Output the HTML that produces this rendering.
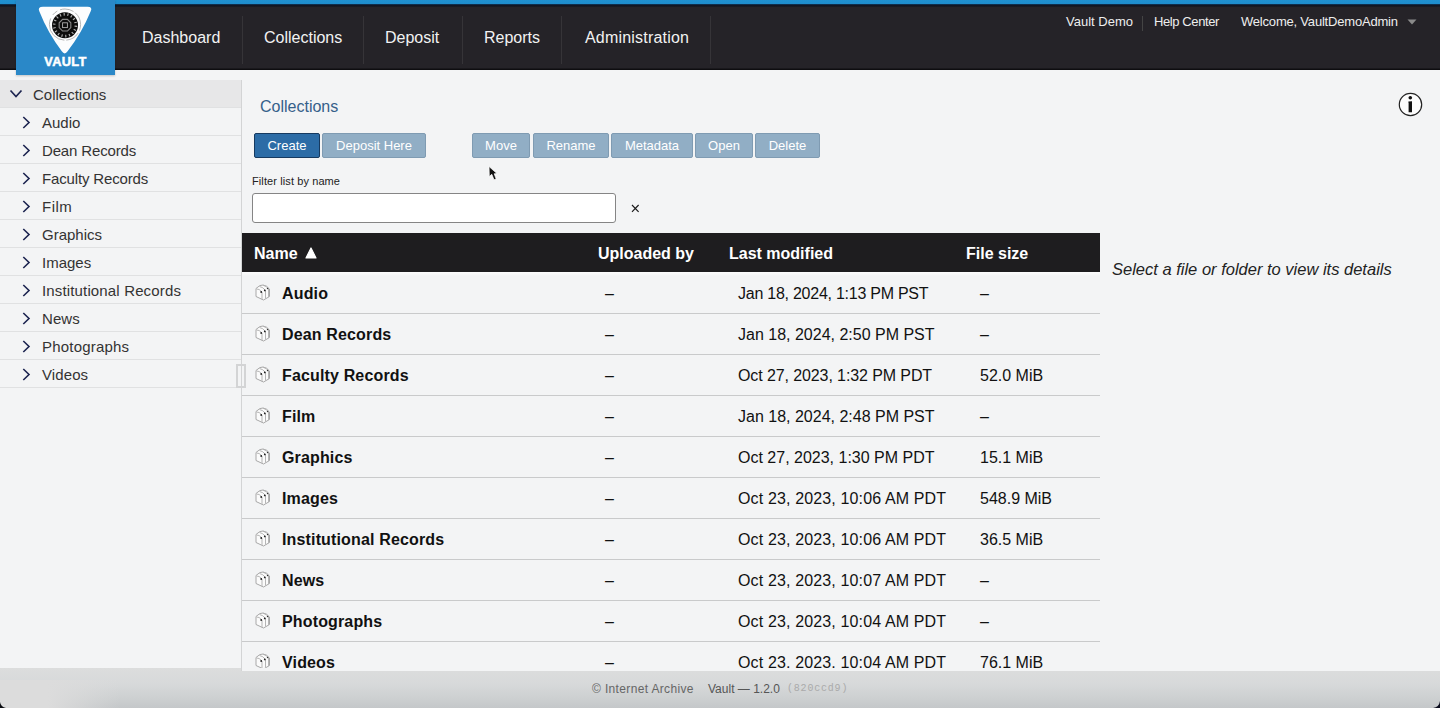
<!DOCTYPE html>
<html><head><meta charset="utf-8"><style>
*{box-sizing:border-box;margin:0;padding:0}
html,body{width:1440px;height:708px;overflow:hidden;background:#f3f4f5;font-family:"Liberation Sans",sans-serif;color:#222}
.abs{position:absolute;white-space:nowrap}
#topstrip{position:absolute;left:0;top:0;width:1440px;height:5px;background:linear-gradient(#2090d0 0,#1e8dcd 4px,#0d1a30 4.6px,#0d1a30 5px)}
#header{position:absolute;left:0;top:5px;width:1440px;height:65px;background:linear-gradient(#0f1626 0,#121620 1.2px,#252328 2.2px,#252328 63px,#0e0d10 64px)}
#logo{position:absolute;left:16px;top:0;width:99px;height:75px;background:#2a88c8;box-shadow:0 1px 2px rgba(0,0,0,.2)}
.nav{position:absolute;top:6px;height:64px;line-height:64px;color:#f2f2f2;font-size:16px;white-space:nowrap}
.sep{position:absolute;top:16px;width:1px;height:48px;background:#363438}
.rnav{position:absolute;top:14px;font-size:13px;color:#eee;white-space:nowrap}
#sidebar{position:absolute;left:0;top:80px;width:242px;height:591px;border-right:1px solid #d3d4d5;background:#f3f4f5}
.srow{position:absolute;left:0;width:241px;height:28px;border-bottom:1px solid #e0e1e2;font-size:15px;color:#333;line-height:28px}
.chev{position:absolute}
.btn{position:absolute;top:133px;height:25px;color:#fff;font-size:13px;line-height:24px;text-align:center;border-radius:2px;white-space:nowrap}
.b1{background:#2c6ca6;border:1px solid #163a60}
.b2{background:#91aec5;border:1px solid #7f9bb2}
#thead{position:absolute;left:242px;top:233px;width:858px;height:39px;background:#1e1d1f;color:#fff;font-weight:bold;font-size:16px}
.th{position:absolute;top:1px;line-height:39px;white-space:nowrap}
.row{position:absolute;left:242px;width:858px;height:42px;border-bottom:1px solid #c9cacb}
.cell{position:absolute;top:2px;line-height:40px;white-space:nowrap;font-size:16px;color:#111}
.nm{font-weight:bold;letter-spacing:0.15px}
</style></head><body>
<div id="topstrip"></div><div id="header"></div>
<div id="logo"><svg width="99" height="75" viewBox="0 0 99 75" style="position:absolute;left:0;top:0">
<path d="M27 6.8 L71.5 6.8 Q77 6.8 74.6 11.6 Q65.8 33 51.6 51.3 Q48.7 55.6 45.8 51.3 Q31.8 33 23.4 11.6 Q21.2 6.8 27 6.8 Z" fill="#fcfdfe"/>
<circle cx="49" cy="24.6" r="15.6" fill="none" stroke="#9a9a9a" stroke-width="0.7" stroke-dasharray="6 3 14 2 30 4"/>
<circle cx="49" cy="25.2" r="13" fill="#0d0d0d"/>
<path d="M58.55 26.16L61.14 26.42M57.65 29.37L59.99 30.50M55.70 32.07L57.52 33.94M52.95 33.95L54.01 36.32M49.71 34.77L49.91 37.37M46.40 34.44L45.69 36.94M43.39 32.99L41.88 35.10M41.07 30.61L38.92 32.07M39.70 27.57L37.18 28.21M39.45 24.24L36.86 23.98M40.35 21.03L38.01 19.90M42.30 18.33L40.48 16.46M45.05 16.45L43.99 14.08M48.29 15.63L48.09 13.03M51.60 15.96L52.31 13.46M54.61 17.41L56.12 15.30M56.93 19.79L59.08 18.33M58.30 22.83L60.82 22.19" stroke="#dcdcdc" stroke-width="1.1" opacity="0.8"/>
<circle cx="49" cy="25.2" r="9" fill="#0d0d0d"/>
<polygon points="54.82,27.61 51.41,31.02 46.59,31.02 43.18,27.61 43.18,22.79 46.59,19.38 51.41,19.38 54.82,22.79" fill="none" stroke="#8a8a8a" stroke-width="1.1"/>
<rect x="46.6" y="22.8" width="4.8" height="4.8" fill="none" stroke="#b0b0b0" stroke-width="0.9"/>
<text x="49.5" y="66" text-anchor="middle" font-family="Liberation Sans" font-weight="bold" font-size="12.8" fill="#fff" stroke="#fff" stroke-width="0.5" letter-spacing="0.3">VAULT</text>
</svg></div>
<div class="nav" style="left:142px;">Dashboard</div>
<div class="nav" style="left:264px;">Collections</div>
<div class="nav" style="left:385px;">Deposit</div>
<div class="nav" style="left:484px;">Reports</div>
<div class="nav" style="left:585px;letter-spacing:0.2px">Administration</div>
<div class="sep" style="left:242px"></div>
<div class="sep" style="left:363px"></div>
<div class="sep" style="left:462px"></div>
<div class="sep" style="left:561px"></div>
<div class="sep" style="left:710px"></div>
<div class="rnav" style="left:1066px">Vault Demo</div>
<div class="abs" style="left:1142px;top:16px;width:1px;height:15px;background:#444"></div>
<div class="rnav" style="left:1154px;letter-spacing:-0.4px">Help Center</div>
<div class="rnav" style="left:1241px;letter-spacing:-0.2px">Welcome, VaultDemoAdmin</div>
<svg class="abs" style="left:1407px;top:19px" width="10" height="6" viewBox="0 0 10 6"><path d="M0.5 0.5 L9.5 0.5 L5 5.5 Z" fill="#8a8a8a"/></svg>
<div id="sidebar"></div>
<div class="srow" style="top:80px;background:#e7e7e8"><svg class="chev" style="left:9px;top:9px" width="14" height="10" viewBox="0 0 14 10"><path d="M1.5 1.5 L7 7.5 L12.5 1.5" fill="none" stroke="#1c2450" stroke-width="1.7"/></svg><span style="position:absolute;left:33px;top:1px">Collections</span></div>
<div class="srow" style="top:108px"><svg class="chev" style="left:22px;top:8px" width="9" height="13" viewBox="0 0 9 13"><path d="M1.3 1 L7 6.5 L1.3 12" fill="none" stroke="#1c2450" stroke-width="1.6"/></svg><span style="position:absolute;left:42px;top:1px;letter-spacing:0px">Audio</span></div>
<div class="srow" style="top:136px"><svg class="chev" style="left:22px;top:8px" width="9" height="13" viewBox="0 0 9 13"><path d="M1.3 1 L7 6.5 L1.3 12" fill="none" stroke="#1c2450" stroke-width="1.6"/></svg><span style="position:absolute;left:42px;top:1px;letter-spacing:-0.15px">Dean Records</span></div>
<div class="srow" style="top:164px"><svg class="chev" style="left:22px;top:8px" width="9" height="13" viewBox="0 0 9 13"><path d="M1.3 1 L7 6.5 L1.3 12" fill="none" stroke="#1c2450" stroke-width="1.6"/></svg><span style="position:absolute;left:42px;top:1px;letter-spacing:-0.15px">Faculty Records</span></div>
<div class="srow" style="top:192px"><svg class="chev" style="left:22px;top:8px" width="9" height="13" viewBox="0 0 9 13"><path d="M1.3 1 L7 6.5 L1.3 12" fill="none" stroke="#1c2450" stroke-width="1.6"/></svg><span style="position:absolute;left:42px;top:1px;letter-spacing:0.5px">Film</span></div>
<div class="srow" style="top:220px"><svg class="chev" style="left:22px;top:8px" width="9" height="13" viewBox="0 0 9 13"><path d="M1.3 1 L7 6.5 L1.3 12" fill="none" stroke="#1c2450" stroke-width="1.6"/></svg><span style="position:absolute;left:42px;top:1px;letter-spacing:0px">Graphics</span></div>
<div class="srow" style="top:248px"><svg class="chev" style="left:22px;top:8px" width="9" height="13" viewBox="0 0 9 13"><path d="M1.3 1 L7 6.5 L1.3 12" fill="none" stroke="#1c2450" stroke-width="1.6"/></svg><span style="position:absolute;left:42px;top:1px;letter-spacing:0px">Images</span></div>
<div class="srow" style="top:276px"><svg class="chev" style="left:22px;top:8px" width="9" height="13" viewBox="0 0 9 13"><path d="M1.3 1 L7 6.5 L1.3 12" fill="none" stroke="#1c2450" stroke-width="1.6"/></svg><span style="position:absolute;left:42px;top:1px;letter-spacing:0.15px">Institutional Records</span></div>
<div class="srow" style="top:304px"><svg class="chev" style="left:22px;top:8px" width="9" height="13" viewBox="0 0 9 13"><path d="M1.3 1 L7 6.5 L1.3 12" fill="none" stroke="#1c2450" stroke-width="1.6"/></svg><span style="position:absolute;left:42px;top:1px;letter-spacing:0.1px">News</span></div>
<div class="srow" style="top:332px"><svg class="chev" style="left:22px;top:8px" width="9" height="13" viewBox="0 0 9 13"><path d="M1.3 1 L7 6.5 L1.3 12" fill="none" stroke="#1c2450" stroke-width="1.6"/></svg><span style="position:absolute;left:42px;top:1px;letter-spacing:0.2px">Photographs</span></div>
<div class="srow" style="top:360px"><svg class="chev" style="left:22px;top:8px" width="9" height="13" viewBox="0 0 9 13"><path d="M1.3 1 L7 6.5 L1.3 12" fill="none" stroke="#1c2450" stroke-width="1.6"/></svg><span style="position:absolute;left:42px;top:1px;letter-spacing:0.1px">Videos</span></div>
<div class="abs" style="left:236px;top:364px;width:10px;height:24px;border:2px solid #d3d4d5;background:transparent"></div>
<div class="abs" style="left:260px;top:98px;font-size:16px;color:#35608a">Collections</div>
<div class="btn b1" style="left:254px;width:66px">Create</div>
<div class="btn b2" style="left:322px;width:104px">Deposit Here</div>
<div class="btn b2" style="left:472px;width:58px">Move</div>
<div class="btn b2" style="left:533px;width:76px">Rename</div>
<div class="btn b2" style="left:611px;width:82px">Metadata</div>
<div class="btn b2" style="left:695px;width:58px">Open</div>
<div class="btn b2" style="left:755px;width:65px">Delete</div>
<div class="abs" style="left:252px;top:175px;font-size:11px;color:#222;letter-spacing:0.1px">Filter list by name</div>
<div class="abs" style="left:252px;top:193px;width:364px;height:30px;background:#fff;border:1.5px solid #858585;border-radius:3px"></div>
<svg class="abs" style="left:630px;top:203px" width="11" height="11" viewBox="0 0 11 11"><path d="M2 2 L8.6 8.8 M8.6 2 L2 8.8" stroke="#1a1a1a" stroke-width="1.15"/></svg>
<div id="thead"><div class="th" style="left:12px">Name</div><svg style="position:absolute;left:63px;top:14px" width="12" height="12" viewBox="0 0 12 12"><path d="M6 1 L11 11 L1 11 Z" fill="#fff" stroke="#fff" stroke-width="1.2" stroke-linejoin="round"/></svg><div class="th" style="left:356px">Uploaded by</div><div class="th" style="left:487px">Last modified</div><div class="th" style="left:724px">File size</div></div>
<div class="row" style="top:272px"><svg class="abs" style="left:13px;top:12px" width="16" height="17" viewBox="0 0 16 17"><path d="M1 4.5 Q5 0.5 8 1 Q12 1.5 14.5 5 L14.5 12.5 L8.5 16 L1 12.5 Z" fill="#fbfbfb" stroke="#a8a8a8" stroke-width="1"/><path d="M1.5 5 Q4 4.5 7 8 L7 15.5 M4.5 2.5 Q8 3 10.5 6.5 L10.5 14.5 M8 1.2 Q11.5 2 13.5 5 L13.5 13" fill="none" stroke="#b5b5b5" stroke-width="1"/><circle cx="6.2" cy="8" r="0.9" fill="#222"/><circle cx="9.8" cy="6.4" r="0.9" fill="#222"/><circle cx="12.6" cy="4.5" r="0.8" fill="#333"/></svg><div class="cell nm" style="left:40px">Audio</div><div class="cell" style="left:363px">–</div><div class="cell" style="left:496px;letter-spacing:-0.25px">Jan 18, 2024, 1:13 PM PST</div><div class="cell" style="left:738px">–</div></div>
<div class="row" style="top:313px"><svg class="abs" style="left:13px;top:12px" width="16" height="17" viewBox="0 0 16 17"><path d="M1 4.5 Q5 0.5 8 1 Q12 1.5 14.5 5 L14.5 12.5 L8.5 16 L1 12.5 Z" fill="#fbfbfb" stroke="#a8a8a8" stroke-width="1"/><path d="M1.5 5 Q4 4.5 7 8 L7 15.5 M4.5 2.5 Q8 3 10.5 6.5 L10.5 14.5 M8 1.2 Q11.5 2 13.5 5 L13.5 13" fill="none" stroke="#b5b5b5" stroke-width="1"/><circle cx="6.2" cy="8" r="0.9" fill="#222"/><circle cx="9.8" cy="6.4" r="0.9" fill="#222"/><circle cx="12.6" cy="4.5" r="0.8" fill="#333"/></svg><div class="cell nm" style="left:40px">Dean Records</div><div class="cell" style="left:363px">–</div><div class="cell" style="left:496px;letter-spacing:0px">Jan 18, 2024, 2:50 PM PST</div><div class="cell" style="left:738px">–</div></div>
<div class="row" style="top:354px"><svg class="abs" style="left:13px;top:12px" width="16" height="17" viewBox="0 0 16 17"><path d="M1 4.5 Q5 0.5 8 1 Q12 1.5 14.5 5 L14.5 12.5 L8.5 16 L1 12.5 Z" fill="#fbfbfb" stroke="#a8a8a8" stroke-width="1"/><path d="M1.5 5 Q4 4.5 7 8 L7 15.5 M4.5 2.5 Q8 3 10.5 6.5 L10.5 14.5 M8 1.2 Q11.5 2 13.5 5 L13.5 13" fill="none" stroke="#b5b5b5" stroke-width="1"/><circle cx="6.2" cy="8" r="0.9" fill="#222"/><circle cx="9.8" cy="6.4" r="0.9" fill="#222"/><circle cx="12.6" cy="4.5" r="0.8" fill="#333"/></svg><div class="cell nm" style="left:40px">Faculty Records</div><div class="cell" style="left:363px">–</div><div class="cell" style="left:496px;letter-spacing:-0.1px">Oct 27, 2023, 1:32 PM PDT</div><div class="cell" style="left:738px">52.0 MiB</div></div>
<div class="row" style="top:395px"><svg class="abs" style="left:13px;top:12px" width="16" height="17" viewBox="0 0 16 17"><path d="M1 4.5 Q5 0.5 8 1 Q12 1.5 14.5 5 L14.5 12.5 L8.5 16 L1 12.5 Z" fill="#fbfbfb" stroke="#a8a8a8" stroke-width="1"/><path d="M1.5 5 Q4 4.5 7 8 L7 15.5 M4.5 2.5 Q8 3 10.5 6.5 L10.5 14.5 M8 1.2 Q11.5 2 13.5 5 L13.5 13" fill="none" stroke="#b5b5b5" stroke-width="1"/><circle cx="6.2" cy="8" r="0.9" fill="#222"/><circle cx="9.8" cy="6.4" r="0.9" fill="#222"/><circle cx="12.6" cy="4.5" r="0.8" fill="#333"/></svg><div class="cell nm" style="left:40px">Film</div><div class="cell" style="left:363px">–</div><div class="cell" style="left:496px;letter-spacing:0px">Jan 18, 2024, 2:48 PM PST</div><div class="cell" style="left:738px">–</div></div>
<div class="row" style="top:436px"><svg class="abs" style="left:13px;top:12px" width="16" height="17" viewBox="0 0 16 17"><path d="M1 4.5 Q5 0.5 8 1 Q12 1.5 14.5 5 L14.5 12.5 L8.5 16 L1 12.5 Z" fill="#fbfbfb" stroke="#a8a8a8" stroke-width="1"/><path d="M1.5 5 Q4 4.5 7 8 L7 15.5 M4.5 2.5 Q8 3 10.5 6.5 L10.5 14.5 M8 1.2 Q11.5 2 13.5 5 L13.5 13" fill="none" stroke="#b5b5b5" stroke-width="1"/><circle cx="6.2" cy="8" r="0.9" fill="#222"/><circle cx="9.8" cy="6.4" r="0.9" fill="#222"/><circle cx="12.6" cy="4.5" r="0.8" fill="#333"/></svg><div class="cell nm" style="left:40px">Graphics</div><div class="cell" style="left:363px">–</div><div class="cell" style="left:496px;letter-spacing:0px">Oct 27, 2023, 1:30 PM PDT</div><div class="cell" style="left:738px">15.1 MiB</div></div>
<div class="row" style="top:477px"><svg class="abs" style="left:13px;top:12px" width="16" height="17" viewBox="0 0 16 17"><path d="M1 4.5 Q5 0.5 8 1 Q12 1.5 14.5 5 L14.5 12.5 L8.5 16 L1 12.5 Z" fill="#fbfbfb" stroke="#a8a8a8" stroke-width="1"/><path d="M1.5 5 Q4 4.5 7 8 L7 15.5 M4.5 2.5 Q8 3 10.5 6.5 L10.5 14.5 M8 1.2 Q11.5 2 13.5 5 L13.5 13" fill="none" stroke="#b5b5b5" stroke-width="1"/><circle cx="6.2" cy="8" r="0.9" fill="#222"/><circle cx="9.8" cy="6.4" r="0.9" fill="#222"/><circle cx="12.6" cy="4.5" r="0.8" fill="#333"/></svg><div class="cell nm" style="left:40px">Images</div><div class="cell" style="left:363px">–</div><div class="cell" style="left:496px;letter-spacing:0.14px">Oct 23, 2023, 10:06 AM PDT</div><div class="cell" style="left:738px">548.9 MiB</div></div>
<div class="row" style="top:518px"><svg class="abs" style="left:13px;top:12px" width="16" height="17" viewBox="0 0 16 17"><path d="M1 4.5 Q5 0.5 8 1 Q12 1.5 14.5 5 L14.5 12.5 L8.5 16 L1 12.5 Z" fill="#fbfbfb" stroke="#a8a8a8" stroke-width="1"/><path d="M1.5 5 Q4 4.5 7 8 L7 15.5 M4.5 2.5 Q8 3 10.5 6.5 L10.5 14.5 M8 1.2 Q11.5 2 13.5 5 L13.5 13" fill="none" stroke="#b5b5b5" stroke-width="1"/><circle cx="6.2" cy="8" r="0.9" fill="#222"/><circle cx="9.8" cy="6.4" r="0.9" fill="#222"/><circle cx="12.6" cy="4.5" r="0.8" fill="#333"/></svg><div class="cell nm" style="left:40px">Institutional Records</div><div class="cell" style="left:363px">–</div><div class="cell" style="left:496px;letter-spacing:0.14px">Oct 23, 2023, 10:06 AM PDT</div><div class="cell" style="left:738px">36.5 MiB</div></div>
<div class="row" style="top:559px"><svg class="abs" style="left:13px;top:12px" width="16" height="17" viewBox="0 0 16 17"><path d="M1 4.5 Q5 0.5 8 1 Q12 1.5 14.5 5 L14.5 12.5 L8.5 16 L1 12.5 Z" fill="#fbfbfb" stroke="#a8a8a8" stroke-width="1"/><path d="M1.5 5 Q4 4.5 7 8 L7 15.5 M4.5 2.5 Q8 3 10.5 6.5 L10.5 14.5 M8 1.2 Q11.5 2 13.5 5 L13.5 13" fill="none" stroke="#b5b5b5" stroke-width="1"/><circle cx="6.2" cy="8" r="0.9" fill="#222"/><circle cx="9.8" cy="6.4" r="0.9" fill="#222"/><circle cx="12.6" cy="4.5" r="0.8" fill="#333"/></svg><div class="cell nm" style="left:40px">News</div><div class="cell" style="left:363px">–</div><div class="cell" style="left:496px;letter-spacing:0.14px">Oct 23, 2023, 10:07 AM PDT</div><div class="cell" style="left:738px">–</div></div>
<div class="row" style="top:600px"><svg class="abs" style="left:13px;top:12px" width="16" height="17" viewBox="0 0 16 17"><path d="M1 4.5 Q5 0.5 8 1 Q12 1.5 14.5 5 L14.5 12.5 L8.5 16 L1 12.5 Z" fill="#fbfbfb" stroke="#a8a8a8" stroke-width="1"/><path d="M1.5 5 Q4 4.5 7 8 L7 15.5 M4.5 2.5 Q8 3 10.5 6.5 L10.5 14.5 M8 1.2 Q11.5 2 13.5 5 L13.5 13" fill="none" stroke="#b5b5b5" stroke-width="1"/><circle cx="6.2" cy="8" r="0.9" fill="#222"/><circle cx="9.8" cy="6.4" r="0.9" fill="#222"/><circle cx="12.6" cy="4.5" r="0.8" fill="#333"/></svg><div class="cell nm" style="left:40px">Photographs</div><div class="cell" style="left:363px">–</div><div class="cell" style="left:496px;letter-spacing:0.14px">Oct 23, 2023, 10:04 AM PDT</div><div class="cell" style="left:738px">–</div></div>
<div class="row" style="top:641px"><svg class="abs" style="left:13px;top:12px" width="16" height="17" viewBox="0 0 16 17"><path d="M1 4.5 Q5 0.5 8 1 Q12 1.5 14.5 5 L14.5 12.5 L8.5 16 L1 12.5 Z" fill="#fbfbfb" stroke="#a8a8a8" stroke-width="1"/><path d="M1.5 5 Q4 4.5 7 8 L7 15.5 M4.5 2.5 Q8 3 10.5 6.5 L10.5 14.5 M8 1.2 Q11.5 2 13.5 5 L13.5 13" fill="none" stroke="#b5b5b5" stroke-width="1"/><circle cx="6.2" cy="8" r="0.9" fill="#222"/><circle cx="9.8" cy="6.4" r="0.9" fill="#222"/><circle cx="12.6" cy="4.5" r="0.8" fill="#333"/></svg><div class="cell nm" style="left:40px">Videos</div><div class="cell" style="left:363px">–</div><div class="cell" style="left:496px;letter-spacing:0.14px">Oct 23, 2023, 10:04 AM PDT</div><div class="cell" style="left:738px">76.1 MiB</div></div>
<div class="abs" style="left:1112px;top:260px;font-size:16.5px;font-style:italic;color:#222">Select a file or folder to view its details</div>
<svg class="abs" style="left:1396px;top:91px" width="28" height="28" viewBox="0 0 28 28"><circle cx="14.5" cy="13.5" r="11.2" fill="#fdfdfd" stroke="#222" stroke-width="1.2"/><circle cx="14.3" cy="6.7" r="1.8" fill="#111"/><path d="M12.4 10.6 L16 10.3 L16 21.3 L12.6 21.3 L12.6 11.8 L12.4 11.8 Z" fill="#111"/></svg>
<div class="abs" style="left:0;top:668px;width:1440px;height:40px;background:linear-gradient(#dcdddd 0,#d7d9da 40%,#cdd0d1 75%,#c4c7c9 100%)"></div>
<div class="abs" style="left:0;top:680px;width:120px;height:28px;background:linear-gradient(90deg,#dcdcdc 0,#dcdcdc 40%,rgba(220,220,220,0) 100%)"></div>
<div class="abs" style="left:241px;top:668px;width:1199px;height:3px;background:#f3f4f5;border-left:1px solid #d3d4d5"></div>
<div class="abs" style="left:592px;top:682px;font-size:12px;color:#666;letter-spacing:0.35px">© Internet Archive</div>
<div class="abs" style="left:708px;top:682px;font-size:12px;color:#555">Vault — 1.2.0</div>
<div class="abs" style="left:787px;top:683px;font-size:10px;color:#aaa;font-family:'Liberation Mono',monospace;letter-spacing:0.8px">(820ccd9)</div>
<svg class="abs" style="left:0;top:702px" width="6" height="6" viewBox="0 0 6 6"><path d="M0 0 Q0.8 5.2 6 6 L0 6 Z" fill="#0b0d12"/></svg>
<svg class="abs" style="left:1433px;top:701px" width="7" height="7" viewBox="0 0 7 7"><path d="M7 0 Q6.2 6.2 0 7 L7 7 Z" fill="#0b0c1e"/></svg>
<div class="abs" style="left:242px;top:272px;width:858px;height:4px;background:linear-gradient(#fdfdfd,rgba(253,253,253,0))"></div>
<svg class="abs" style="left:488px;top:165px" width="12" height="18" viewBox="0 0 12 18"><path d="M1 1.5 L1.3 11.5 L3.8 9.3 L6 14.8 L8.2 14 L6.2 8.8 L9 8.6 Z" fill="#111" stroke="#fff" stroke-width="0.7"/></svg>
</body></html>
